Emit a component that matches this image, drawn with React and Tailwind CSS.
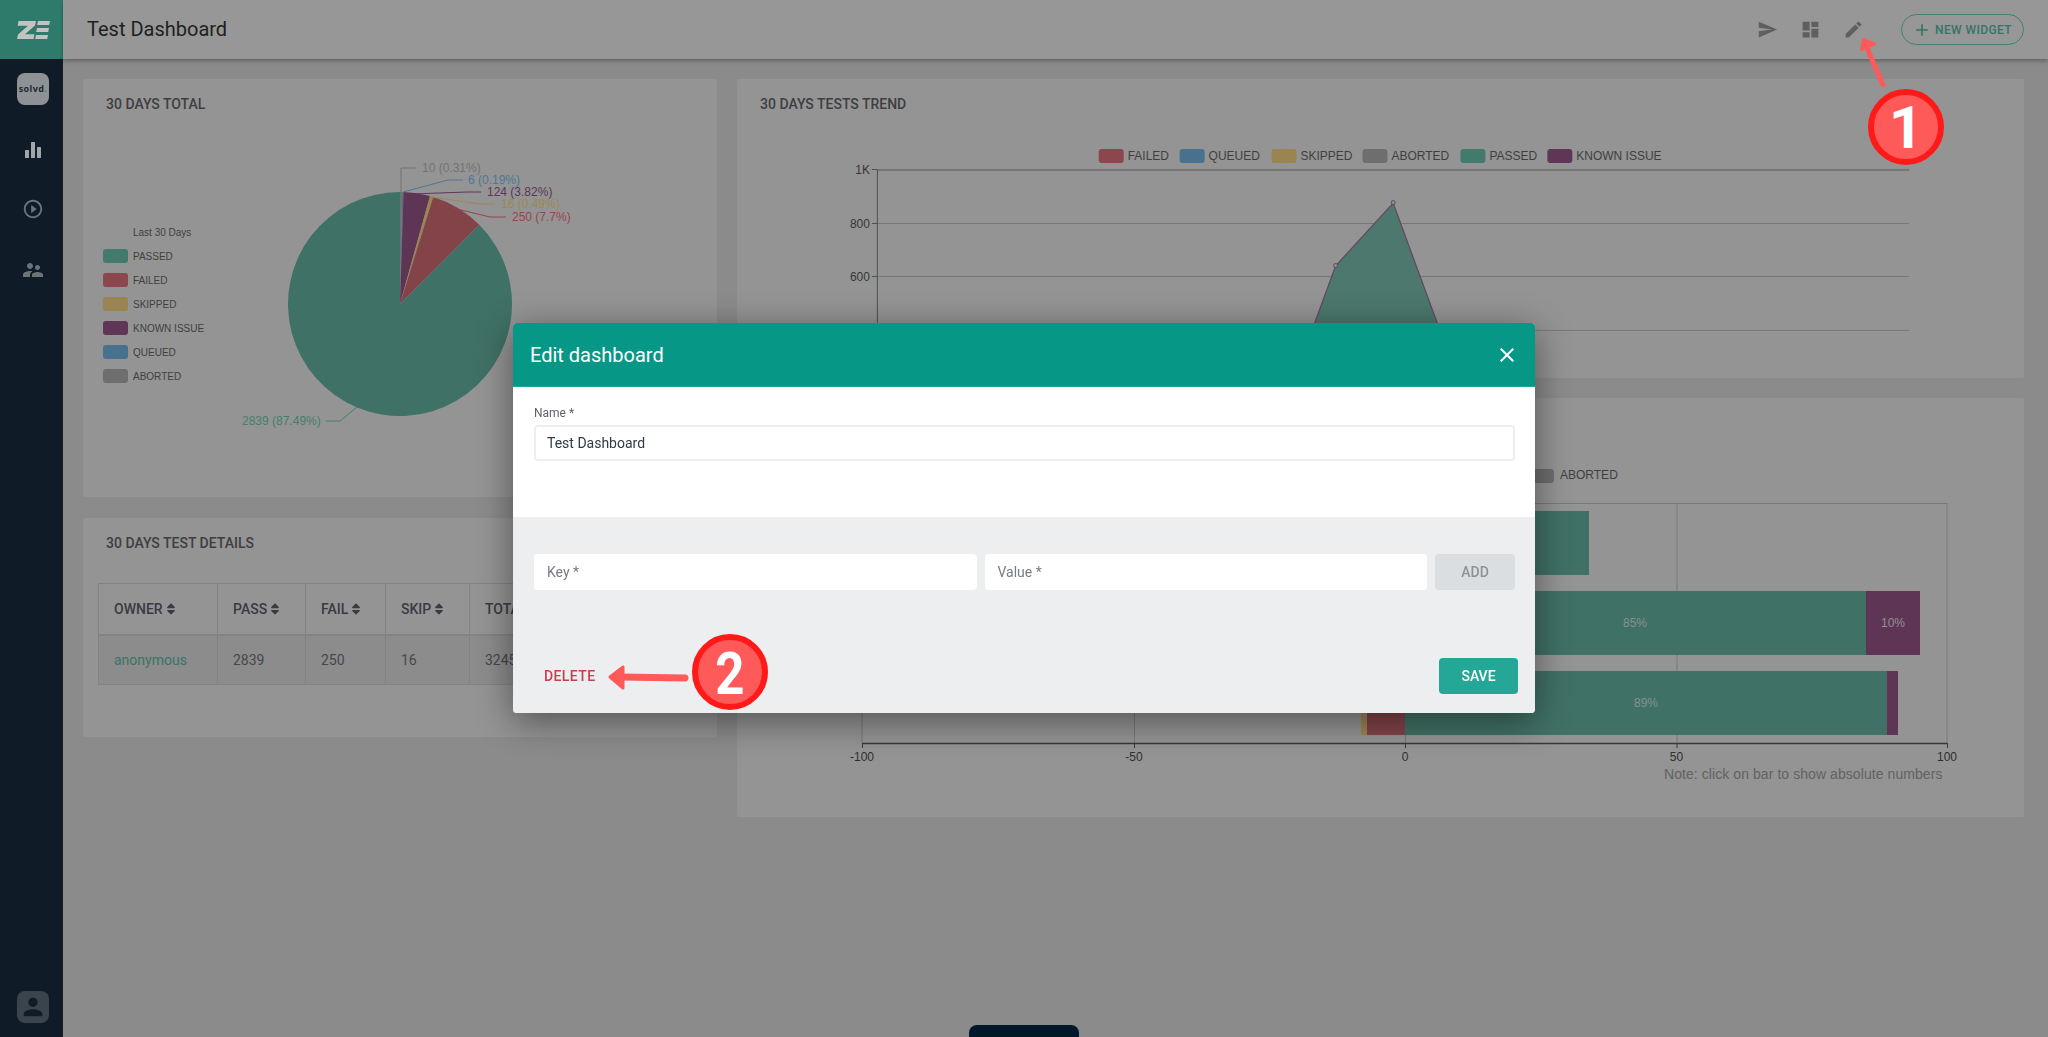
import React from "react";
import { MdSend, MdDashboard, MdEdit, MdAdd, MdClose, MdPlayCircleOutline, MdSupervisorAccount, MdPerson } from "react-icons/md";
import { FaSort } from "react-icons/fa";

const C = {
  passed: "#407166",
  failed: "#824449",
  skipped: "#9c8553",
  known: "#5e3555",
  queued: "#4a738f",
  aborted: "#717171",
};
const SW = {
  passed: "#437a6d",
  failed: "#8c464d",
  skipped: "#9a8552",
  known: "#5f3656",
  queued: "#47718d",
  aborted: "#6e6e6e",
};

function slice(cx, cy, r, a0, a1) {
  const p = (v) => {
    const t = (v / 100) * 2 * Math.PI;
    return `${cx + r * Math.sin(t)} ${cy - r * Math.cos(t)}`;
  };
  return `M${cx} ${cy}L${p(a0)}A${r} ${r} 0 ${a1 - a0 > 50 ? 1 : 0} 1 ${p(a1)}Z`;
}

function Card({ title, className, children }) {
  return (
    <section className={`flex flex-col rounded-[2px] bg-[#949494] ${className}`}>
      {title ? (
        <h2 className="pl-[23px] pt-[15px] text-sm leading-5 font-medium text-[#3e3e42]">{title}</h2>
      ) : (
        <div className="h-[35px]" />
      )}
      {children}
    </section>
  );
}

function PieChart() {
  const parts = [
    ["aborted", 0.31],
    ["queued", 0.19],
    ["known", 3.82],
    ["skipped", 0.49],
    ["failed", 7.7],
    ["passed", 87.49],
  ];
  let a = 0;
  const legend = [
    ["passed", "PASSED"],
    ["failed", "FAILED"],
    ["skipped", "SKIPPED"],
    ["known", "KNOWN ISSUE"],
    ["queued", "QUEUED"],
    ["aborted", "ABORTED"],
  ];
  const labels = [
    ["10 (0.31%)", 422, 168, "#737373", "M401 192V168H416"],
    ["6 (0.19%)", 468, 180, "#4a7896", "M403 192L448 180H463"],
    ["124 (3.82%)", 487, 192, "#5f3558", "M411 194L467 192H481"],
    ["16 (0.49%)", 501, 204, "#9c8850", "M432 197L480 204H495"],
    ["250 (7.7%)", 512, 217, "#94454f", "M453 208L490 217H506"],
    ["2839 (87.49%)", 242, 421, "#427f70", "M357 407L340 421H326"],
  ];
  return (
    <svg viewBox="83 114 634 383" className="h-[383px] w-[634px] font-['Liberation_Sans',sans-serif]">
      <text x="133" y="235.5" fontSize="10" fill="#404040">Last 30 Days</text>
      {legend.map(([k, t], i) => (
        <g key={k}>
          <rect x="103" y={249 + i * 24} width="25" height="14" rx="3" fill={SW[k]} />
          <text x="133" y={259.5 + i * 24} fontSize="10" fill="#404040">{t}</text>
        </g>
      ))}
      {parts.map(([k, v]) => {
        const d = slice(400, 304, 112, a, a + v);
        a += v;
        return <path key={k} d={d} fill={C[k]} />;
      })}
      {labels.map(([t, x, y, c, d]) => (
        <g key={t}>
          <path d={d} fill="none" stroke={c} strokeWidth="1" />
          <text x={x} y={y + 4.2} fontSize="12" fill={c}>{t}</text>
        </g>
      ))}
    </svg>
  );
}

function TrendChart() {
  const legend = [
    ["failed", "FAILED", 1099],
    ["queued", "QUEUED", 1180],
    ["skipped", "SKIPPED", 1272],
    ["aborted", "ABORTED", 1363],
    ["passed", "PASSED", 1461],
    ["known", "KNOWN ISSUE", 1548],
  ];
  return (
    <svg viewBox="737 114 1288 264" className="h-[264px] w-full font-['Liberation_Sans',sans-serif]">
      {legend.map(([k, t, x]) => (
        <g key={k}>
          <rect x={x} y="149" width="25" height="14" rx="3" fill={SW[k]} />
          <text x={x + 29} y="160.3" fontSize="12" fill="#3f3f3f">{t}</text>
        </g>
      ))}
      <path d="M878 170H1910" stroke="#767676" strokeWidth="2" />
      {[224, 277, 331].map((y) => (
        <path key={y} d={`M878 ${y - 0.5}H1910`} stroke="#767676" strokeWidth="1" />
      ))}
      <path d="M877.5 170V400" stroke="#4f4f4f" strokeWidth="1" />
      {[
        [169.5, "1K"],
        [223.5, "800"],
        [276.5, "600"],
      ].map(([y, t]) => (
        <g key={t}>
          <path d={`M872 ${y}H878`} stroke="#4f4f4f" />
          <text x="870" y={y + 4.5} fontSize="12" textAnchor="end" fill="#363636">{t}</text>
        </g>
      ))}
      <path d="M1287 400L1336 266L1393.7 203L1466 400Z" fill="#4c786d" />
      <path d="M1287 400L1336 266L1393.7 203L1466 400" fill="none" stroke="#644562" strokeWidth="1.2" />
      <circle cx="1336" cy="265.5" r="2" fill="#8f8f8f" stroke="#644562" />
      <circle cx="1393.7" cy="202.5" r="2" fill="#8f8f8f" stroke="#644562" />
    </svg>
  );
}

function BarChart() {
  const ticks = [
    [862, "-100"],
    [1134, "-50"],
    [1405, "0"],
    [1676.5, "50"],
    [1947, "100"],
  ];
  return (
    <svg viewBox="737 433 1287 384" className="h-[384px] w-full font-['Liberation_Sans',sans-serif]">
      <rect x="1500" y="469" width="54" height="14" rx="3" fill="#6e6e6e" />
      <text x="1560" y="479.3" fontSize="12" fill="#3f3f3f">ABORTED</text>
      <path d="M862 503.5H1947M1947 503V743M862 503V743" fill="none" stroke="#787878" />
      {ticks.slice(1, 4).map(([x]) => (
        <path key={x} d={`M${x + 0.5} 503V743`} stroke="#787878" />
      ))}
      <rect x="1300" y="511" width="289" height="64" fill={C.passed} />
      <rect x="1300" y="591" width="566" height="64" fill={C.passed} />
      <rect x="1866" y="591" width="54" height="64" fill={C.known} />
      <rect x="1405" y="671" width="482" height="64" fill={C.passed} />
      <rect x="1887" y="671" width="11" height="64" fill={C.known} />
      <rect x="1367" y="671" width="38" height="64" fill={C.failed} />
      <rect x="1361" y="671" width="6" height="64" fill={C.skipped} />
      <text x="1635" y="627" fontSize="12" textAnchor="middle" fill="#85928e">85%</text>
      <text x="1893" y="627" fontSize="12" textAnchor="middle" fill="#968f96">10%</text>
      <text x="1646" y="707" fontSize="12" textAnchor="middle" fill="#85928e">89%</text>
      <path d="M862 743.5H1947" stroke="#383838" strokeWidth="1.5" />
      {ticks.map(([x, t]) => (
        <g key={t}>
          <path d={`M${x + 0.5} 743V748`} stroke="#383838" />
          <text x={x} y="761" fontSize="12" textAnchor="middle" fill="#2e2e2e">{t}</text>
        </g>
      ))}
      <text x="1664" y="779" fontSize="14" letterSpacing="0.07" fill="#626262">Note: click on bar to show absolute numbers</text>
    </svg>
  );
}

function Th({ children, w }) {
  return (
    <th className={`border border-[#838383] border-b-2 pl-[15px] text-left font-medium ${w}`}>
      <span className="inline-flex items-center gap-[1px]">
        {children}
        <FaSort size={14} />
      </span>
    </th>
  );
}

function Td({ children, className = "" }) {
  return <td className={`border border-[#838383] pl-[15px] ${className}`}>{children}</td>;
}

function Logo() {
  return (
    <svg width="33" height="18" viewBox="0 0 33 18" fill="#c0c5c2">
      <path d="M1.5 0H19L18 4.5L8 13.2H17.5L16.5 18H0L1 13.5L11 4.8H0.7Z" />
      <path d="M21 0H33L32.2 4H20.2ZM20 7H32L31.2 11H19.2ZM19 14H31L30.2 18H18.2Z" />
    </svg>
  );
}

function Annotations() {
  const red = "#ff5a5a";
  return (
    <svg className="pointer-events-none fixed inset-0 z-20 h-[1037px] w-[2048px] font-['Roboto',sans-serif]" viewBox="0 0 2048 1037">
      <path d="M1883 85L1867 48" stroke={red} strokeWidth="5" strokeLinecap="round" />
      <path d="M1863.3 39L1861 50L1875.5 44Z" fill={red} stroke={red} strokeWidth="2" strokeLinejoin="round" />
      <circle cx="1906" cy="127" r="35" fill={red} stroke="#ff1a1a" strokeWidth="6" />
      <text x="1906" y="148" fontSize="60" fontWeight="700" fill="#fff" textAnchor="middle">1</text>
      <path d="M685 678L620 677" stroke={red} strokeWidth="7" strokeLinecap="round" />
      <path d="M610 677L623 667V688Z" fill={red} stroke={red} strokeWidth="3" strokeLinejoin="round" />
      <circle cx="730" cy="672" r="35" fill={red} stroke="#ff1a1a" strokeWidth="6" />
      <text x="730" y="694" fontSize="60" fontWeight="700" fill="#fff" textAnchor="middle" transform="translate(730 0) scale(.85 1) translate(-730 0)">2</text>
    </svg>
  );
}

function Modal() {
  return (
    <div className="fixed inset-0 z-10 flex items-center justify-center pb-[1px]">
      <div className="flex h-[390px] w-[1022px] flex-col overflow-hidden rounded-[4px] bg-white shadow-[0_8px_36px_rgba(0,0,0,0.45)]">
        <div className="flex h-[64px] items-center justify-between border-b border-[#1ea593] bg-[#069787] pl-[17px] pr-[16px] text-white">
          <h3 className="text-xl font-normal">Edit dashboard</h3>
          <MdClose size={24} />
        </div>
        <div className="h-[130px] pl-[21px] pr-[20px] pt-[18px]">
          <label className="mb-[4px] block text-xs leading-4 text-[#5d636a]">Name *</label>
          <input
            readOnly
            value="Test Dashboard"
            className="h-[36px] w-full rounded-[4px] border-2 border-[#eeeeef] px-[11px] text-sm text-[#2c3a47] outline-none"
          />
        </div>
        <div className="flex flex-1 flex-col bg-[#edeef0] pt-[37px]">
          <div className="flex gap-[8px] pl-[21px] pr-[20px]">
            <input
              placeholder="Key *"
              className="h-[36px] min-w-0 flex-1 rounded-[4px] bg-white px-[13px] text-sm outline-none placeholder:text-[#767c83]"
            />
            <input
              placeholder="Value *"
              className="h-[36px] min-w-0 flex-1 rounded-[4px] bg-white px-[13px] text-sm outline-none placeholder:text-[#767c83]"
            />
            <button className="h-[36px] w-[80px] rounded-[4px] bg-[#dbdee0] text-sm font-medium text-[#8d9296]">ADD</button>
          </div>
          <div className="mt-auto flex items-center justify-between pb-[19px] pl-[31px] pr-[17px]">
            <button className="text-sm font-medium tracking-[0.4px] text-[#c5404f]">DELETE</button>
            <button className="h-[36px] w-[79px] rounded-[4px] bg-[#24a797] text-sm font-medium text-white">SAVE</button>
          </div>
        </div>
      </div>
    </div>
  );
}

export default function App() {
  return (
    <div className="relative flex h-screen w-full overflow-hidden bg-[#8b8b8b] font-['Roboto',sans-serif]">
      <aside className="flex w-[63px] shrink-0 flex-col bg-[#0f1b26]">
        <div className="flex h-[59px] w-full items-center justify-center bg-[#2e7b6c] pl-[3px]">
          <Logo />
        </div>
        <div className="flex flex-1 flex-col items-center pl-[3px]">
          <div className="mt-[14px] flex h-[32px] w-[32px] items-center justify-center rounded-[8px] bg-[#8f9294] font-['Open_Sans',sans-serif] text-[9px] font-bold tracking-[0.4px] text-[#1f2a33]">
            solvd<span className="text-[#2e7b6c]">.</span>
          </div>
          <svg className="mt-[37px]" width="16" height="16" viewBox="0 0 16 16" fill="#a3a6a8">
            <rect x="0" y="8" width="4" height="8" rx="0.5" />
            <rect x="6" y="0" width="4" height="16" rx="0.5" />
            <rect x="12" y="5" width="4" height="11" rx="0.5" />
          </svg>
          <MdPlayCircleOutline className="mt-[40px] text-[#6c7478]" size={22} />
          <MdSupervisorAccount className="mt-[38px] text-[#6c7478]" size={24} />
          <div className="mb-[14px] mt-auto flex h-[32px] w-[32px] items-center justify-center rounded-[8px] bg-[#3a444d] text-[#0f1b26]">
            <MdPerson size={28} />
          </div>
        </div>
      </aside>

      <div className="flex min-w-0 flex-1 flex-col">
        <header className="relative flex h-[59px] shrink-0 items-center bg-[#979797] pl-[24px] pr-[24px] shadow-[0_2px_4px_rgba(0,0,0,0.3)]">
          <h1 className="pb-[2px] text-xl font-normal text-[#1f1f1f]">Test Dashboard</h1>
          <div className="ml-auto flex items-center gap-[22px] text-[#5c6063]">
            <MdSend size={21} />
            <MdDashboard size={21} />
            <MdEdit size={21} />
          </div>
          <button className="ml-[37px] flex h-[31px] w-[123px] items-center rounded-full border border-[#437f73] pl-[10px] text-xs font-medium tracking-[0.4px] text-[#357466]">
            <MdAdd size={20} className="mr-[3px]" />
            NEW WIDGET
          </button>
        </header>

        <main className="flex min-h-0 flex-1 gap-[20px] pl-[20px] pr-[24px] pt-[20px]">
          <div className="flex w-[634px] shrink-0 flex-col gap-[21px]">
            <Card title="30 DAYS TOTAL" className="h-[418px]">
              <PieChart />
            </Card>
            <Card title="30 DAYS TEST DETAILS" className="h-[219px]">
              <div className="pl-[15px] pt-[30px]">
                <table className="w-[600px] table-fixed border-collapse text-sm text-[#47474c]">
                  <thead className="text-[#3a3a42]">
                    <tr className="h-[51px]">
                      <Th w="w-[119px]">OWNER</Th>
                      <Th w="w-[88px]">PASS</Th>
                      <Th w="w-[80px]">FAIL</Th>
                      <Th w="w-[84px]">SKIP</Th>
                      <Th w="w-auto">TOTAL</Th>
                    </tr>
                  </thead>
                  <tbody>
                    <tr className="h-[50px] bg-[#8c8c8c]">
                      <Td className="text-[#387566]">anonymous</Td>
                      <Td>2839</Td>
                      <Td>250</Td>
                      <Td>16</Td>
                      <Td>3245</Td>
                    </tr>
                  </tbody>
                </table>
              </div>
            </Card>
          </div>
          <div className="flex min-w-0 flex-1 flex-col gap-[20px]">
            <Card title="30 DAYS TESTS TREND" className="h-[299px]">
              <TrendChart />
            </Card>
            <Card className="h-[419px]">
              <BarChart />
            </Card>
          </div>
        </main>
      </div>

      <div className="absolute bottom-0 left-[969px] h-[12px] w-[110px] rounded-t-[8px] bg-[#02172a]" />
      <Modal />
      <Annotations />
    </div>
  );
}
